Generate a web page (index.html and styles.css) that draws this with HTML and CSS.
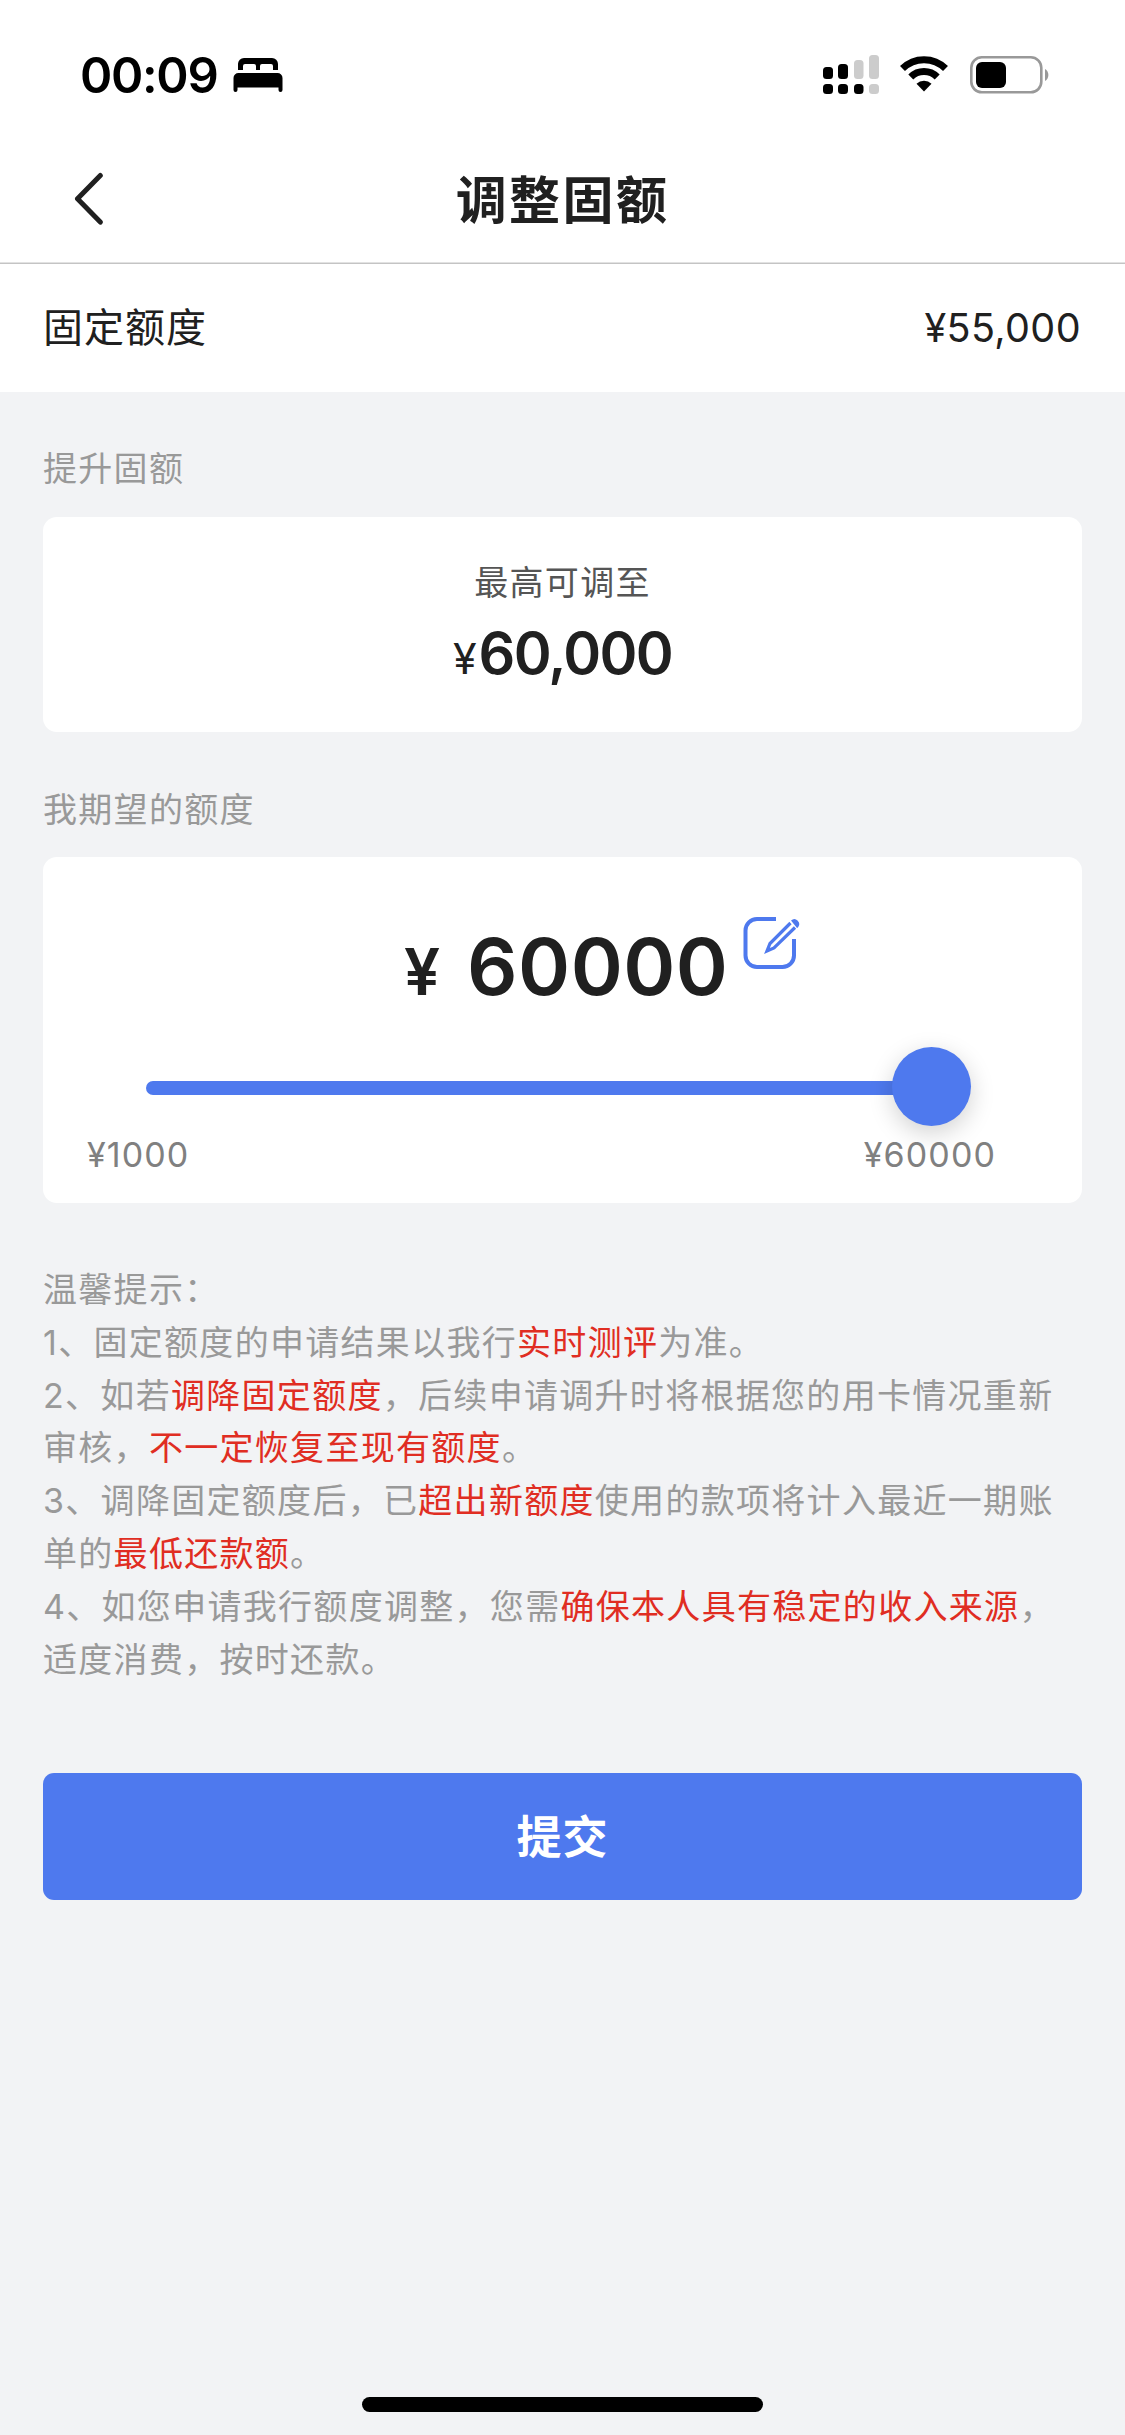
FILE: index.html
```html
<!DOCTYPE html>
<html lang="zh-CN">
<head>
<meta charset="utf-8">
<title>调整固额</title>
<link rel="stylesheet" href="styles.css">
</head>
<body>
<div class="screen">
  <header class="header">
    <div class="status">
      <div class="status-left">
        <span class="time">00:09</span>
        <svg class="bed" width="50" height="34" viewBox="0 0 50 34">
          <path d="M5 12V6a6 6 0 0 1 6-6h28a6 6 0 0 1 6 6v6h-5V8a2 2 0 0 0-2-2h-9a2 2 0 0 0-2 2v4h-4V8a2 2 0 0 0-2-2h-9a2 2 0 0 0-2 2v4z"/>
          <path d="M5.500 15h39a5 5 0 0 1 5 5v12a2 2 0 0 1-4 0v-2.500H4.500V32a2 2 0 0 1-4 0V20a5 5 0 0 1 5-5z"/>
        </svg>
      </div>
      <div class="status-right">
        <svg width="56" height="40" viewBox="0 0 56 40">
          <g fill="#000"><rect x="0" y="12" width="10" height="12" rx="3.500"/><rect x="15" y="9" width="10" height="15" rx="3.500"/><rect x="0" y="29" width="10" height="10" rx="3.500"/><rect x="15" y="29" width="10" height="10" rx="3.500"/><rect x="31" y="29" width="9.500" height="10" rx="3.500"/></g>
          <g fill="#ccc"><rect x="31" y="5" width="9.500" height="19" rx="3.500"/><rect x="46" y="0" width="10" height="24" rx="3.500"/><rect x="46" y="29" width="10" height="10" rx="3.500"/></g>
        </svg>
        <svg class="wifi" width="48" height="36" viewBox="0 0 48 36">
          <g fill="none" stroke="#000" stroke-width="7"><path d="M2.500 12.500a30.500 30.500 0 0 1 43 0"/><path d="M10.800 21a18.700 18.700 0 0 1 26.400 0"/></g>
          <path d="M24 35.500l-7.500-7.700a10.700 10.700 0 0 1 15 0z"/>
        </svg>
        <svg class="battery" width="80" height="38" viewBox="0 0 80 38">
          <rect x="1.300" y="1.300" width="70" height="35" rx="10.500" fill="none" stroke="#999" stroke-width="2.600"/>
          <rect x="6" y="6" width="30" height="26" rx="6" fill="#000"/>
          <path d="M75 13a7 7 0 0 1 0 12z" fill="#999"/>
        </svg>
      </div>
    </div>
    <div class="nav">
      <svg class="back" width="30" height="54" viewBox="0 0 30 54"><path d="M26.300 3.500L3.500 26.800l22.800 23.300" fill="none" stroke="#202020" stroke-width="5" stroke-linecap="round" stroke-linejoin="round"/></svg>
      <h1 class="title">调整固额</h1>
    </div>
  </header>
  <section class="limit-row"><span class="limit-name">固定额度</span><span class="limit-value">¥55,000</span></section>
  <main class="content">
    <h2 class="label">提升固额</h2>
    <section class="card max-card">
      <div class="max-caption">最高可调至</div>
      <div class="max-amount"><span class="yen">¥</span><span>60,000</span></div>
    </section>
    <h2 class="label label-wish">我期望的额度</h2>
    <section class="card wish-card">
      <div class="wish-amount">
        <span class="wish-yen">¥</span><span class="wish-number">60000</span>
        <svg class="edit" width="57" height="54" viewBox="0 0 57 54">
          <g fill="none" stroke="#4e79ee" stroke-width="4">
            <path d="M33 3H14A11.500 11.500 0 0 0 2.500 14.500v25A11.500 11.500 0 0 0 14 51h25.500A11.500 11.500 0 0 0 51 39.500V23" stroke-linecap="butt"/>
            <path d="M47.500 7L27 27.500 24 35 31 32 52 11.500" stroke-width="3.200"/>
          </g>
          <path d="M48 4.500q3.500-3 6.500 0t1 6q-.5 1-1.500 1.500z" fill="#4e79ee"/>
        </svg>
      </div>
      <div class="slider"><div class="track"></div><div class="thumb"></div></div>
      <div class="range"><span class="range-min">¥1000</span><span class="range-max">¥60000</span></div>
    </section>
    <section class="tips">
      <p>温馨提示：</p>
      <p>1、固定额度的申请结果以我行<em>实时测评</em>为准。</p>
      <p>2、如若<em>调降固定额度</em>，后续申请调升时将根据您的用卡情况重新</p>
      <p>审核，<em>不一定恢复至现有额度</em>。</p>
      <p>3、调降固定额度后，已<em>超出新额度</em>使用的款项将计入最近一期账</p>
      <p>单的<em>最低还款额</em>。</p>
      <p>4、如您申请我行额度调整，您需<em>确保本人具有稳定的收入来源</em>，</p>
      <p>适度消费，按时还款。</p>
    </section>
    <button class="submit">提交</button>
  </main>
  <div class="home-bar"></div>
</div>
</body>
</html>
```
FILE: styles.css
```css
* { box-sizing: border-box; }
body, h1, h2, p { margin: 0; }
body {
  background: #f2f3f5;
  color: #202020;
  font-family: Inter, "Noto Sans CJK SC", sans-serif;
}
svg { display: block; flex: none; }
.screen { width: 1125px; height: 2435px; display: flex; flex-direction: column; background: #f2f3f5; }
.header { height: 264px; background: #fff; border-bottom: 1px solid #c4c4c4; box-shadow: inset 0 -1px #e2e2e2; }
.status { height: 135px; padding: 0 75px 0 80px; display: flex; justify-content: space-between; }
.status-left { display: flex; padding-top: 46px; }
.time { width: 153px; font-size: 49px; line-height: 60px; font-weight: 600; letter-spacing: -1.300px; color: #000; }
.bed { margin-top: 12px; }
.status-right { display: flex; padding-top: 55px; }
.wifi { margin: 1px 22px 0 21px; }
.battery { margin-top: 1px; }
.nav { height: 127px; display: grid; grid-template-columns: 200px 1fr 200px; align-items: start; }
.back { margin: 37px 0 0 74px; }
.title { grid-column: 2; margin-top: 30px; font-size: 51px; line-height: 72px; font-weight: 600; letter-spacing: 2.400px; text-align: center; }
.limit-row { height: 128px; padding: 0 44px 0 43px; display: flex; align-items: center; justify-content: space-between; background: #fff; }
.limit-name, .limit-value { line-height: 60px; }
.limit-name { font-size: 40px; letter-spacing: 1px; }
.limit-value { font-size: 39.500px; letter-spacing: .400px; }
.content { padding: 0 43px; }
.label { margin-top: 50px; height: 75px; font-size: 34px; line-height: 54px; font-weight: 400; letter-spacing: 1.300px; color: #999; }
.label-wish { margin-top: 51px; height: 74px; }
.card { background: #fff; border-radius: 14px; }
.max-card { height: 215px; padding-top: 40px; text-align: center; }
.max-caption { font-size: 34px; line-height: 52px; letter-spacing: 1.300px; color: #555; }
.max-amount { margin-top: 6px; height: 76px; display: flex; justify-content: center; align-items: baseline; font-size: 57.500px; line-height: 76px; font-weight: 600; letter-spacing: -1.700px; }
.yen { font-size: 43px; font-weight: 400; letter-spacing: 2px; }
.wish-card { height: 346px; padding-top: 59px; }
.wish-amount { height: 100px; padding-left: 361px; display: flex; align-items: baseline; font-weight: 600; line-height: 100px; }
.wish-yen { width: 63px; font-size: 64px; }
.wish-number { width: 276px; font-size: 79px; letter-spacing: .500px; }
.edit { align-self: flex-start; }
.slider { margin: 31px 111px 0 103px; height: 79px; display: flex; align-items: center; }
.track { flex: 1; height: 14px; margin-top: 2px; border-radius: 7px 0 0 7px; background: #4e79ee; }
.thumb { width: 79px; height: 79px; margin-left: -4px; border-radius: 50%; background: #4e79ee; box-shadow: 0 7px 24px rgba(0, 0, 0, .18); }
.range { margin: 8px 86px 0 44px; display: flex; justify-content: space-between; font-size: 34px; line-height: 42px; letter-spacing: 1.100px; color: #808080; }
.tips { margin-top: 61px; font-size: 34px; line-height: 52.800px; letter-spacing: 1.300px; color: #999; white-space: nowrap; }
.tips em { font-style: normal; color: #e02d22; }
.submit { display: block; width: 100%; height: 127px; margin-top: 87px; padding: 3px 0 0; border: 0; border-radius: 11px; background: #4e79ee; color: #fff; font: 600 45px/124px Inter, "Noto Sans CJK SC", sans-serif; letter-spacing: 1px; }
.home-bar { width: 401px; height: 15px; margin: auto auto 23px; border-radius: 8px; background: #000; }
```
